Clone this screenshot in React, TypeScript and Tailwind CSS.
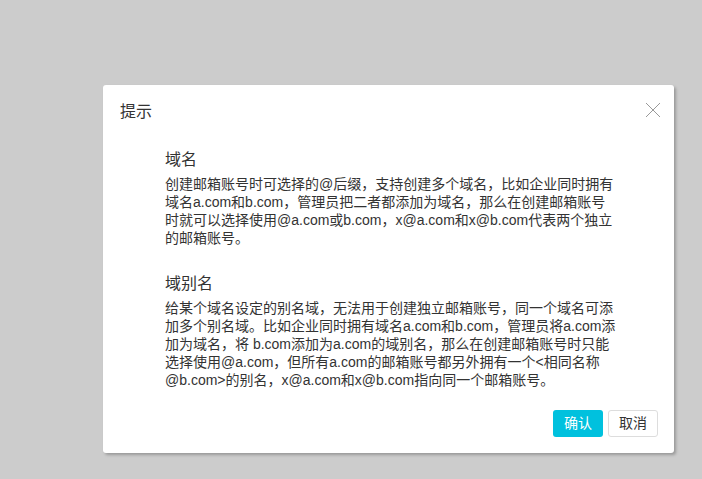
import React from "react";

const sections = [
  {
    title: "域名",
    lines: [
      "创建邮箱账号时可选择的@后缀，支持创建多个域名，比如企业同时拥有",
      "域名a.com和b.com，管理员把二者都添加为域名，那么在创建邮箱账号",
      "时就可以选择使用@a.com或b.com，x@a.com和x@b.com代表两个独立",
      "的邮箱账号。",
    ],
  },
  {
    title: "域别名",
    lines: [
      "给某个域名设定的别名域，无法用于创建独立邮箱账号，同一个域名可添",
      "加多个别名域。比如企业同时拥有域名a.com和b.com，管理员将a.com添",
      "加为域名，将 b.com添加为a.com的域别名，那么在创建邮箱账号时只能",
      "选择使用@a.com，但所有a.com的邮箱账号都另外拥有一个<相同名称",
      "@b.com>的别名，x@a.com和x@b.com指向同一个邮箱账号。",
    ],
  },
];

export default function App() {
  return (
    <div
      className="w-[702px] h-[479px] bg-[#cccccc] pt-[85px] pl-[103px] overflow-hidden"
      style={{ fontFamily: '"Liberation Sans", "Noto Sans CJK SC", sans-serif' }}
    >
      <div className="w-[571px] h-[368px] bg-white rounded-[3px] shadow-[2px_2px_3px_rgba(0,0,0,0.25)] flex flex-col">
        <div className="flex items-start justify-between pl-[17px] pr-[13px] pt-[15px]">
          <span className="text-[16px] leading-[24px] text-[#333]">提示</span>
          <button className="mt-[2px] w-[16px] h-[16px] flex items-center justify-center">
            <svg width="16" height="16" viewBox="0 0 16 16">
              <path d="M1 1L15 15M15 1L1 15" stroke="#999" strokeWidth="1" fill="none" />
            </svg>
          </button>
        </div>
        <div className="pl-[62px] pt-[24px] flex flex-col gap-[25px]">
          {sections.map((s) => (
            <div key={s.title}>
              <h3 className="text-[16px] leading-[24px] text-[#333] font-normal">{s.title}</h3>
              <p className="mt-[3px] text-[14px] leading-[18px] text-[#333] whitespace-nowrap">
                {s.lines.map((l, i) => (
                  <React.Fragment key={i}>
                    {l}
                    {i < s.lines.length - 1 && <br />}
                  </React.Fragment>
                ))}
              </p>
            </div>
          ))}
        </div>
        <div className="mt-auto flex justify-end gap-[5px] pr-[16px] pb-[16px]">
          <button className="w-[50px] h-[27px] rounded-[3px] bg-[#00c1de] text-white text-[14px]">确认</button>
          <button className="w-[50px] h-[27px] rounded-[3px] bg-white border border-[#dddddd] text-[#333] text-[14px]">
            取消
          </button>
        </div>
      </div>
    </div>
  );
}
